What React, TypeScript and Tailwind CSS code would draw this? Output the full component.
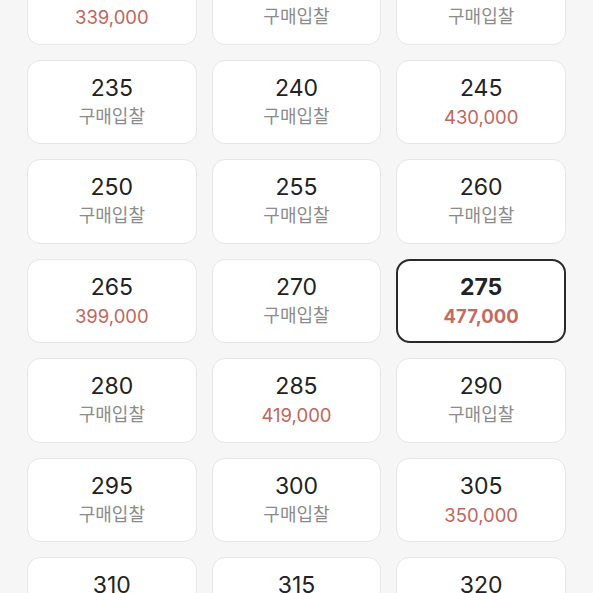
import React from 'react';

type Size = { size: number; price?: number };

const SIZES: Size[] = [
  { size: 220, price: 339000 },
  { size: 225 },
  { size: 230 },
  { size: 235 },
  { size: 240 },
  { size: 245, price: 430000 },
  { size: 250 },
  { size: 255 },
  { size: 260 },
  { size: 265, price: 399000 },
  { size: 270 },
  { size: 275, price: 477000 },
  { size: 280 },
  { size: 285, price: 419000 },
  { size: 290 },
  { size: 295 },
  { size: 300 },
  { size: 305, price: 350000 },
  { size: 310 },
  { size: 315 },
  { size: 320 },
];

const SELECTED = 275;

export default function App() {
  return (
    <div
      className="w-[593px] h-[593px] overflow-hidden bg-[#f6f6f6]"
      style={{ fontFamily: '"Inter", "Noto Sans CJK KR", sans-serif' }}
    >
      <div className="grid grid-cols-3 gap-x-[15px] gap-y-[15px] px-[27px] -mt-[40px]">
        {SIZES.map(s => {
          const sel = s.size === SELECTED;
          return (
            <div
              key={s.size}
              className={
                sel
                  ? 'h-[84.5px] rounded-[14px] bg-white border-2 border-[#2a2a2a] flex flex-col items-center justify-center gap-[4px]'
                  : 'h-[84.5px] rounded-[13px] bg-white border border-[#e6e6e6] flex flex-col items-center justify-center gap-[4px]'
              }
            >
              <span
                className={
                  sel
                    ? 'text-[23px] leading-[26px] font-bold text-[#222]'
                    : 'text-[23px] leading-[26px] text-[#222]'
                }
              >
                {s.size}
              </span>
              {s.price ? (
                <span
                  className={
                    sel
                      ? 'text-[18.5px] leading-[24px] font-bold text-[#c66a5d]'
                      : 'text-[18.5px] leading-[24px] text-[#c2665c]'
                  }
                >
                  {s.price.toLocaleString('en-US')}
                </span>
              ) : (
                <span className="text-[18px] leading-[24px] text-[#8c8c8c]">구매입찰</span>
              )}
            </div>
          );
        })}
      </div>
    </div>
  );
}
